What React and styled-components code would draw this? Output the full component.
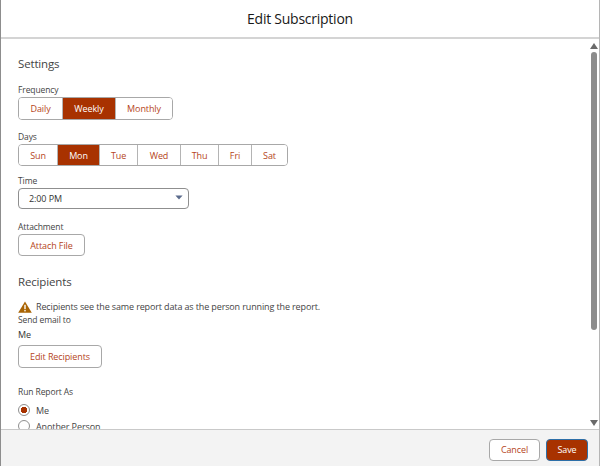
import React from "react";
import styled, { createGlobalStyle } from "styled-components";

const GlobalStyle = createGlobalStyle`
  html, body {
    margin: 0;
    padding: 0;
    background: #fff;
  }
`;

const frequencies = [
  { label: "Daily", width: 43 },
  { label: "Weekly", width: 53 },
  { label: "Monthly", width: 57 },
];

const days = [
  { label: "Sun", width: 38 },
  { label: "Mon", width: 42 },
  { label: "Tue", width: 38 },
  { label: "Wed", width: 43 },
  { label: "Thu", width: 38 },
  { label: "Fri", width: 33 },
  { label: "Sat", width: 36 },
];

const App = () => {
  return (
    <>
      <GlobalStyle />
      <Modal>
        <Header>Edit Subscription</Header>
        <Main>
          <Content>
            <SectionTitle>Settings</SectionTitle>
            <Label $top={9}>Frequency</Label>
            <Group $h={21}>
              {frequencies.map((f) => (
                <Segment key={f.label} $w={f.width} $active={f.label === "Weekly"}>{f.label}</Segment>
              ))}
            </Group>
            <Label $top={10}>Days</Label>
            <Group $h={20}>
              {days.map((d) => (
                <Segment key={d.label} $w={d.width} $active={d.label === "Mon"}>{d.label}</Segment>
              ))}
            </Group>
            <Label $top={8}>Time</Label>
            <Select>
              2:00 PM
              <Caret viewBox="0 0 10 6">
                <path d="M0.5 0.5h9L5 5.5z" fill="#5b6b8c" />
              </Caret>
            </Select>
            <Label $top={11}>Attachment</Label>
            <Button>Attach File</Button>
            <SectionTitle $top={16}>Recipients</SectionTitle>
            <Warning>
              <svg width="14" height="12" viewBox="0 0 14 12">
                <path d="M7 0.4 13.8 11.7H0.2z" fill="#a96404" />
                <rect x="6.3" y="3.8" width="1.4" height="4.4" fill="#fff" />
                <rect x="6.3" y="9" width="1.4" height="1.4" fill="#fff" />
              </svg>
              Recipients see the same report data as the person running the report.
            </Warning>
            <Label $top={0}>Send email to</Label>
            <Value>Me</Value>
            <Button $width={84} $h={23}>Edit Recipients</Button>
            <Label $top={17}>Run Report As</Label>
            <RadioRow $top={3}>
              <Radio $checked />
              Me
            </RadioRow>
            <RadioRow $top={0}>
              <Radio />
              Another Person
            </RadioRow>
          </Content>
          <Scrollbar>
            <Arrow viewBox="0 0 8 6"><path d="M4 0 8 6H0z" fill="#6a6a6a" /></Arrow>
            <Thumb />
            <Arrow viewBox="0 0 8 6"><path d="M0 0h8L4 6z" fill="#6a6a6a" /></Arrow>
          </Scrollbar>
        </Main>
        <Footer>
          <FooterButton>Cancel</FooterButton>
          <FooterButton $brand>Save</FooterButton>
        </Footer>
      </Modal>
    </>
  );
};

export default App;

const Modal = styled.div`
  width: 600px;
  height: 466px;
  box-sizing: border-box;
  border-left: 1px solid #8d8d8d;
  border-right: 1px solid #b5b5b5;
  display: flex;
  flex-direction: column;
  overflow: hidden;
  font-family: "Open Sans", "Noto Sans", sans-serif;
  font-size: 9px;
  letter-spacing: -0.1px;
  color: #3e3e3c;
`;

const Header = styled.div`
  height: 37px;
  flex: none;
  display: flex;
  align-items: center;
  justify-content: center;
  font-size: 14px;
  letter-spacing: -0.25px;
  color: #181818;
  border-bottom: 2px solid #d4d4d4;
`;

const Main = styled.div`
  flex: 1;
  min-height: 0;
  display: flex;
  overflow: hidden;
`;

const Content = styled.div`
  flex: 1;
  min-width: 0;
  padding: 15px 0 0 17px;
  overflow: hidden;
`;

const SectionTitle = styled.div`
  margin-top: ${(props) => props.$top || 0}px;
  height: 20px;
  line-height: 20px;
  font-size: 11.5px;
  letter-spacing: -0.15px;
  color: #444;
`;

const Label = styled.div`
  margin-top: ${(props) => props.$top}px;
  height: 14px;
  line-height: 14px;
  font-size: 8.5px;
  color: #444;
`;

const Group = styled.div`
  display: flex;
  width: fit-content;
  height: ${(props) => props.$h}px;
  border: 1px solid #a8a8a8;
  border-radius: 4px;
  overflow: hidden;
  background: #fff;
`;

const Segment = styled.div`
  box-sizing: border-box;
  width: ${(props) => props.$w}px;
  display: flex;
  align-items: center;
  justify-content: center;
  color: ${(props) => (props.$active ? "#fff" : "#b5451b")};
  background: ${(props) => (props.$active ? "#a83200" : "#fff")};
  & + & {
    border-left: 1px solid #b4b4b4;
  }
`;

const Select = styled.div`
  box-sizing: border-box;
  width: 171px;
  height: 21px;
  display: flex;
  align-items: center;
  justify-content: space-between;
  padding: 0 5px 0 10px;
  border: 1px solid #8f8f8f;
  border-radius: 4px;
  color: #333;
`;

const Caret = styled.svg`
  width: 8px;
  height: 5px;
  margin-bottom: 3px;
`;

const Button = styled.div`
  box-sizing: border-box;
  width: ${(props) => props.$width || 67}px;
  height: ${(props) => props.$h || 22}px;
  display: flex;
  align-items: center;
  justify-content: center;
  border: 1px solid #a8a8a8;
  border-radius: 4px;
  color: #b5451b;
`;

const Warning = styled.div`
  margin-top: 8px;
  height: 13px;
  display: flex;
  align-items: center;
  gap: 4px;
  letter-spacing: -0.13px;
  color: #444;
`;

const Value = styled.div`
  height: 16px;
  line-height: 16px;
  margin-bottom: 2px;
  color: #333;
`;

const RadioRow = styled.div`
  margin-top: ${(props) => props.$top}px;
  height: 16px;
  display: flex;
  align-items: center;
  gap: 6px;
  color: #444;
`;

const Radio = styled.span`
  box-sizing: border-box;
  width: 12px;
  height: 12px;
  border-radius: 50%;
  border: 1px solid #8f8f8f;
  background: ${(props) => (props.$checked ? "radial-gradient(circle, #a83200 0 3px, #fff 3.5px)" : "#fff")};
`;

const Scrollbar = styled.div`
  flex: none;
  width: 9px;
  margin-right: 1px;
  display: flex;
  flex-direction: column;
  align-items: center;
  justify-content: space-between;
  padding: 4px 0 3px;
`;

const Arrow = styled.svg`
  flex: none;
  width: 8px;
  height: 6px;
`;

const Thumb = styled.div`
  width: 6px;
  height: 278px;
  margin-bottom: auto;
  margin-top: 3px;
  background: #8c8c8c;
  border-radius: 3px;
`;

const Footer = styled.div`
  height: 37px;
  flex: none;
  box-sizing: border-box;
  display: flex;
  align-items: center;
  justify-content: flex-end;
  gap: 6px;
  padding: 3px 11px 0 0;
  background: #f3f3f3;
  border-top: 1px solid #c9c9c9;
`;

const FooterButton = styled.div`
  box-sizing: border-box;
  width: ${(props) => (props.$brand ? 42 : 51)}px;
  height: 22px;
  display: flex;
  align-items: center;
  justify-content: center;
  border-radius: 4px;
  border: 1px solid ${(props) => (props.$brand ? "#2d6fa8" : "#a8a8a8")};
  background: ${(props) => (props.$brand ? "#a83200" : "#fff")};
  color: ${(props) => (props.$brand ? "#fff" : "#b5451b")};
`;
